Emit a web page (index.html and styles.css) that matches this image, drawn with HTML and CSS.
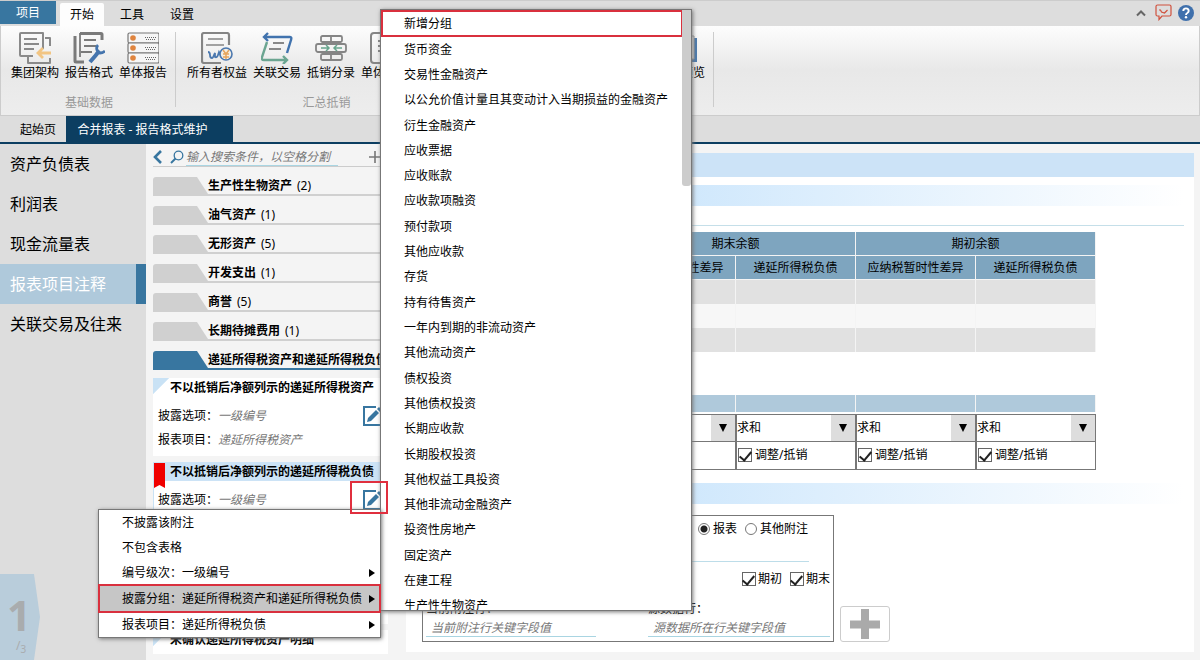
FILE: index.html
```html
<!DOCTYPE html>
<html lang="zh-CN">
<head>
<meta charset="utf-8">
<title>合并报表 - 报告格式维护</title>
<link rel="stylesheet" href="styles.css">
</head>
<body>
<div class="app">
  <header class="titlebar">
    <button class="project-tab">项目</button>
    <button class="tab tab-active">开始</button>
    <button class="tab">工具</button>
    <button class="tab">设置</button>
    <div class="window-tools">
      <svg width="10" height="16" viewBox="0 0 10 16"><path d="M1 10.500l4-4 4 4" fill="none" stroke="#666" stroke-width="2"/></svg>
      <svg width="17" height="17" viewBox="0 0 17 17"><path d="M2.500 1h12q1.500 0 1.500 1.500v8q0 1.500-1.500 1.500H7l-3 3.500v-3.500H2.500Q1 12 1 10.500v-8Q1 1 2.500 1zM4 6l1.500 0 1 2 3 1 3-3" fill="none" stroke="#d0503c" stroke-width="1.200"/></svg>
      <svg width="16" height="16" viewBox="0 0 16 16"><circle cx="8" cy="8" r="8" fill="#3f70ac"/><path d="M5.300 6q0-2.600 2.700-2.600T10.700 6q0 1.200-1.400 2Q8 8.700 8 10" fill="none" stroke="#fff" stroke-width="1.900"/><circle cx="8" cy="12.300" r="1.200" fill="#fff"/></svg>
    </div>
  </header>

  <section class="ribbon">
    <div class="ribbon-group">
      <div class="ribbon-buttons">
        <button class="ribbon-button">
          <svg class="ribbon-icon" viewBox="0 0 32 32"><g fill="none" stroke="#8a8a8a" stroke-width="2" stroke-linejoin="round"><path d="M14 24H2Q1 24 1 23V2q0-1 1-1h22v16"/><path d="M5 7h13M5 12h15M5 17h10" stroke-width="1.800"/><path d="M26 6h5v8M9 25v6h22v-5"/></g><path d="M32 21H19M24 16l-5 5 5 5" fill="none" stroke="#f2c583" stroke-width="2.800"/></svg>
          <span>集团架构</span></button>
        <button class="ribbon-button">
          <svg class="ribbon-icon" viewBox="0 0 32 32"><g fill="none" stroke="#7a7a7a"><path d="M2 4v25q0 1 1 1h8" stroke-width="3"/><path d="M7 1.500h21q1 0 1 1V8" stroke-width="3"/><path d="M7 1v24" stroke-width="1.800"/><path d="M11 8h12M11 14h12M8 20h11" stroke-width="2"/></g><path d="M17 30l6-7 3-4" fill="none" stroke="#4474ad" stroke-width="4"/><path d="M25 13q-2 2-1 5l3 3q3 0 5-2" fill="none" stroke="#4474ad" stroke-width="2.800"/></svg>
          <span>报告格式</span></button>
        <button class="ribbon-button">
          <svg class="ribbon-icon" viewBox="0 0 32 32"><g fill="#f6f6f6" stroke="#777" stroke-width="1.200"><rect x="1" y="1" width="31" height="10" rx="1.500"/><rect x="1" y="11" width="31" height="10" rx="1.500"/><rect x="1" y="21" width="31" height="10" rx="1.500"/></g><g fill="#df843e"><circle cx="6" cy="6" r="2.800"/><circle cx="6" cy="16" r="2.800"/><circle cx="6" cy="26" r="2.800"/></g><path d="M18 5.500h11M19 7.500h10M18 15.500h11M19 17.500h10M18 25.500h11M19 27.500h10" stroke="#666" stroke-dasharray="1 1"/></svg>
          <span>单体报告</span></button>
      </div>
      <div class="group-name">基础数据</div>
    </div>
    <div class="ribbon-group ribbon-group-merge">
      <div class="ribbon-buttons">
        <button class="ribbon-button">
          <svg class="ribbon-icon" viewBox="0 0 32 32"><g fill="none" stroke="#858585"><path d="M28 13V3q0-2-2-2H3Q1 1 1 3v26q0 2 2 2h17" stroke-width="2.200"/><path d="M7 7h15M5 13h18" stroke-width="1.600"/></g><path d="M7 20q2 0 2 3t2 3q1 0 2-3l1-2v4q2 1 3-2l1-3 2 4" fill="none" stroke="#4b78af" stroke-width="1.800"/><circle cx="25" cy="22" r="6" fill="#f4eee4" stroke="#4b78af" stroke-width="1.600"/><path d="M22 18l3 4 3-4M25 22v5M22 22h6M22 25h6" fill="none" stroke="#e7a55c" stroke-width="1.500"/></svg>
          <span>所有者权益</span></button>
        <button class="ribbon-button">
          <svg class="ribbon-icon" viewBox="0 0 32 32"><g fill="none" stroke-width="2.400"><path d="M7 1L3 5l4 4M3 5h26q2 0 1 3l-4 13" stroke="#4173ae"/><path d="M6 10L1 25q-1 3 2 3h23M22 24l4 4-4 4" stroke="#6ba591"/><path d="M12 11h11M8 17h12" stroke="#888" stroke-width="2"/></g></svg>
          <span>关联交易</span></button>
        <button class="ribbon-button">
          <svg class="ribbon-icon" viewBox="0 0 32 32"><g fill="none" stroke="#858585" stroke-width="1.800"><rect x="6" y="4" width="21" height="6" rx="1.500"/><rect x="1" y="12" width="30" height="8" rx="2"/><rect x="6" y="22" width="21" height="6" rx="1.500"/><path d="M16 4v6M16 22v6"/></g><path d="M6 16h7M11 13l3 3-3 3M27 16h-7M22 13l-3 3 3 3" fill="none" stroke="#67a58d" stroke-width="1.500"/></svg>
          <span>抵销分录</span></button>
        <button class="ribbon-button">
          <svg class="ribbon-icon" viewBox="0 0 32 32"><path d="M28 31H5q-3 0-3-3V4q0-3 3-3h23zM9 9h12M9 14h12M9 19h12" fill="none" stroke="#858585" stroke-width="2"/></svg>
          <span>单体抵销</span></button>
      </div>
      <div class="group-name">汇总抵销</div>
    </div>
    <div class="ribbon-group ribbon-group-preview">
      <div class="ribbon-buttons">
        <button class="ribbon-button">
          <svg class="ribbon-icon" viewBox="0 0 32 32"><path d="M6 6h26v24H6z" fill="#4c7aac"/><path d="M3 4h26v23H3z" fill="#eee" stroke="#999"/></svg>
          <span>报告预览</span></button>
      </div>
    </div>
  </section>

  <nav class="document-tabs">
    <button class="document-tab">起始页</button>
    <button class="document-tab document-tab-active">合并报表 - 报告格式维护</button>
  </nav>

  <div class="workspace">
    <nav class="sections">
      <a class="section-link" href="#">资产负债表</a>
      <a class="section-link" href="#">利润表</a>
      <a class="section-link" href="#">现金流量表</a>
      <a class="section-link section-link-active" href="#">报表项目注释</a>
      <a class="section-link" href="#">关联交易及往来</a>
      <div class="page-mark"><b>1</b><span>/<sub>3</sub></span></div>
    </nav>

    <aside class="notes">
      <div class="search">
        <svg width="10" height="14" viewBox="0 0 10 14"><path d="M8 1L2 7l6 6" fill="none" stroke="#3876a0" stroke-width="2.600"/></svg>
        <svg width="14" height="14" viewBox="0 0 14 14"><circle cx="8.500" cy="5.500" r="4.300" fill="none" stroke="#3876a0" stroke-width="1.300"/><path d="M5.500 8.500L1 13" stroke="#3876a0" stroke-width="2"/></svg>
        <input class="search-input" type="text" aria-label="搜索" placeholder="输入搜索条件，以空格分割">
        <button class="add-button" aria-label="新增"><svg width="12" height="12" viewBox="0 0 12 12"><path d="M6 0v12M0 6h12" stroke="#777" stroke-width="1.600"/></svg></button>
      </div>
      <div class="groups">
        <div class="group"><i class="group-flap"></i><b>生产性生物资产</b><span>(2)</span></div>
        <div class="group"><i class="group-flap"></i><b>油气资产</b><span>(1)</span></div>
        <div class="group"><i class="group-flap"></i><b>无形资产</b><span>(5)</span></div>
        <div class="group"><i class="group-flap"></i><b>开发支出</b><span>(1)</span></div>
        <div class="group"><i class="group-flap"></i><b>商誉</b><span>(5)</span></div>
        <div class="group"><i class="group-flap"></i><b>长期待摊费用</b><span>(1)</span></div>
        <div class="group group-open"><i class="group-flap"></i><b>递延所得税资产和递延所得税负债</b></div>
      </div>
      <div class="cards">
        <article class="card">
          <h3 class="card-title">不以抵销后净额列示的递延所得税资产</h3>
          <div class="card-row">披露选项：<em>一级编号</em>
            <button class="edit-button" aria-label="编辑"><svg width="20" height="20" viewBox="0 0 20 20"><path d="M13 1H1v18h18V9" fill="#fff" stroke="#3876a0" stroke-width="2"/><path d="M4 16l1-4 8-8 3 3-8 8zM14 3l2-2 3 3-2 2z" fill="#3876a0"/></svg></button></div>
          <div class="card-row">报表项目：<em>递延所得税资产</em></div>
        </article>
        <article class="card card-selected">
          <h3 class="card-title">不以抵销后净额列示的递延所得税负债</h3>
          <svg class="bookmark" width="11" height="25" viewBox="0 0 11 25"><path d="M0 0h11v25l-5.500-3L0 25z" fill="#f00000"/></svg>
          <div class="card-row">披露选项：<em>一级编号</em>
            <button class="edit-button" aria-label="编辑"><svg width="20" height="20" viewBox="0 0 20 20"><path d="M13 1H1v18h18V9" fill="#fff" stroke="#3876a0" stroke-width="2"/><path d="M4 16l1-4 8-8 3 3-8 8zM14 3l2-2 3 3-2 2z" fill="#3876a0"/></svg></button></div>
        </article>
        <article class="card card-closed">
          <h3 class="card-title">未确认递延所得税资产明细</h3>
        </article>
      </div>
    </aside>

    <main class="editor">
      <div class="editor-heading"></div>
      <div class="band"></div>
      <div class="editor-rule"></div>
      <table class="grid">
        <colgroup><col class="label-column"><col><col><col><col></colgroup>
        <thead>
          <tr><th rowspan="2"></th><th colspan="2">期末余额</th><th colspan="2">期初余额</th></tr>
          <tr><th>应纳税暂时性差异</th><th>递延所得税负债</th><th>应纳税暂时性差异</th><th>递延所得税负债</th></tr>
        </thead>
        <tbody>
          <tr><td></td><td></td><td></td><td></td><td></td></tr>
          <tr><td></td><td></td><td></td><td></td><td></td></tr>
          <tr><td></td><td></td><td></td><td></td><td></td></tr>
        </tbody>
      </table>
      <div class="rules-head"><i></i><i></i><i></i><i></i><i></i></div>
      <div class="rules">
        <div class="rule-cell"></div>
        <div class="rule-cell"><select class="rule-select" aria-label="期末差异"><option></option></select></div>
        <div class="rule-cell"><select class="rule-select" aria-label="期末负债"><option>求和</option></select><label class="check"><input type="checkbox" checked>调整/抵销</label></div>
        <div class="rule-cell"><select class="rule-select" aria-label="期初差异"><option>求和</option></select><label class="check"><input type="checkbox" checked>调整/抵销</label></div>
        <div class="rule-cell"><select class="rule-select" aria-label="期初负债"><option>求和</option></select><label class="check"><input type="checkbox" checked>调整/抵销</label></div>
      </div>
      <div class="band"></div>
      <div class="source">
        <div class="source-box">
          <div class="source-kind">
            <label class="radio"><input type="radio" name="kind" checked>报表</label>
            <label class="radio"><input type="radio" name="kind">其他附注</label>
          </div>
          <div class="source-rule"></div>
          <div class="source-period">
            <label class="check"><input type="checkbox" checked>期初</label>
            <label class="check"><input type="checkbox" checked>期末</label>
          </div>
          <div class="source-fields">
            <label class="field field-current">当前附注行：<input type="text" placeholder="当前附注行关键字段值"></label>
            <label class="field">源数据行：<input type="text" placeholder="源数据所在行关键字段值"></label>
          </div>
        </div>
        <button class="source-add" aria-label="新增数据源"><svg width="30" height="30" viewBox="0 0 30 30"><path d="M15 0v30M0 15.500h30" stroke="#aaa" stroke-width="8"/></svg></button>
      </div>
    </main>
  </div>

  <div class="menu context-menu" role="menu">
    <button class="menu-item" role="menuitem">不披露该附注</button>
    <button class="menu-item" role="menuitem">不包含表格</button>
    <button class="menu-item menu-parent" role="menuitem">编号级次：一级编号</button>
    <button class="menu-item menu-parent menu-current" role="menuitem">披露分组：递延所得税资产和递延所得税负债</button>
    <button class="menu-item menu-parent" role="menuitem">报表项目：递延所得税负债</button>
  </div>

  <div class="menu submenu" role="menu">
    <div class="submenu-list">
      <button class="menu-item menu-marked" role="menuitem">新增分组</button>
      <button class="menu-item" role="menuitem">货币资金</button>
      <button class="menu-item" role="menuitem">交易性金融资产</button>
      <button class="menu-item" role="menuitem">以公允价值计量且其变动计入当期损益的金融资产</button>
      <button class="menu-item" role="menuitem">衍生金融资产</button>
      <button class="menu-item" role="menuitem">应收票据</button>
      <button class="menu-item" role="menuitem">应收账款</button>
      <button class="menu-item" role="menuitem">应收款项融资</button>
      <button class="menu-item" role="menuitem">预付款项</button>
      <button class="menu-item" role="menuitem">其他应收款</button>
      <button class="menu-item" role="menuitem">存货</button>
      <button class="menu-item" role="menuitem">持有待售资产</button>
      <button class="menu-item" role="menuitem">一年内到期的非流动资产</button>
      <button class="menu-item" role="menuitem">其他流动资产</button>
      <button class="menu-item" role="menuitem">债权投资</button>
      <button class="menu-item" role="menuitem">其他债权投资</button>
      <button class="menu-item" role="menuitem">长期应收款</button>
      <button class="menu-item" role="menuitem">长期股权投资</button>
      <button class="menu-item" role="menuitem">其他权益工具投资</button>
      <button class="menu-item" role="menuitem">其他非流动金融资产</button>
      <button class="menu-item" role="menuitem">投资性房地产</button>
      <button class="menu-item" role="menuitem">固定资产</button>
      <button class="menu-item" role="menuitem">在建工程</button>
      <button class="menu-item" role="menuitem">生产性生物资产</button>
    </div>
    <div class="scroll-thumb"></div>
  </div>
  <div class="edit-marker"></div>
</div>
</body>
</html>
```

FILE: styles.css
```css
* { box-sizing: border-box; }

body {
  margin: 0;
  background: #f4f4f4;
  color: #000;
  font: 12px/18px "Noto Sans", "Noto Sans CJK SC", sans-serif;
}

button, input, select {
  margin: 0;
  padding: 0;
  border: 0;
  background: none;
  color: inherit;
  font: inherit;
}

svg { display: block; flex: none; }

.app {
  position: relative;
  display: flex;
  flex-direction: column;
  height: 100vh;
  overflow: hidden;
}

/* Title row */
.titlebar {
  display: flex;
  height: 26px;
  border-top: 1px solid #ccc;
  background: #ddd;
}
.project-tab { width: 56px; height: 23px; margin-right: 4px; background: #3876a0; color: #fff; }
.tab { width: 44px; margin: 2px 6px 0 0; padding-top: 1px; }
.tab-active { background: #fdfdfd; border-radius: 2px 2px 0 0; }
.window-tools { display: flex; align-items: center; gap: 6px; margin-left: auto; padding: 0 6px 2px 0; }
.window-tools svg:first-child { margin-right: 3px; }

/* Ribbon */
.ribbon {
  display: flex;
  height: 90px;
  padding: 6px 0 8px;
  border: 1px solid #ccc;
  border-top: 0;
  background: linear-gradient(#fdfdfd, #e8e8e8 50%, #ededed);
}
.ribbon-group {
  display: flex;
  flex-direction: column;
  align-items: center;
  padding: 0 5px 0 7px;
  border-right: 1px solid #ccc;
}
.ribbon-buttons { display: flex; }
.ribbon-button {
  display: flex;
  flex-direction: column;
  align-items: center;
  padding: 0 3px;
  white-space: nowrap;
}
.ribbon-icon { width: 32px; height: 32px; }
.group-name { margin-top: auto; line-height: 8px; color: #999; }
.ribbon-group-merge { width: 298px; padding-left: 8px; border-right: 0; }
.ribbon-group-merge .ribbon-buttons { align-self: flex-start; }
.ribbon-group-preview { width: 240px; align-items: flex-end; }

/* Document tabs */
.document-tabs { display: flex; height: 28px; padding-left: 10px; border-bottom: 2px solid #0c3e61; background: #ddd; }
.document-tab { width: 56px; padding-top: 2px; }
.document-tab-active { width: 167px; padding-right: 14px; background: #0c3e61; color: #fff; }

/* Workspace */
.workspace { display: flex; flex: 1; min-height: 0; }
.sections { display: flex; flex-direction: column; width: 146px; background: #ddd; }
.section-link {
  padding-left: 10px;
  color: #000;
  font-size: 16px;
  line-height: 40px;
  text-decoration: none;
}
.section-link-active { border-right: 10px solid #3876a0; background: #afc9db; color: #fff; }
.page-mark {
  display: flex;
  flex-direction: column;
  width: 40px;
  height: 86px;
  margin-top: auto;
  padding: 20px 0 0 7px;
  background: #b9cddb;
  clip-path: polygon(0 0, 34px 0, 40px 43px, 34px 100%, 0 100%);
  color: #a9acae;
}
.page-mark b { font-size: 42px; line-height: 42px; }
.page-mark span { padding-left: 9px; line-height: 20px; }

/* Notes column */
.notes { flex: none; width: 246px; padding: 4px 4px 0 7px; overflow: hidden; }
.search {
  display: flex;
  align-items: center;
  height: 19px;
  border-bottom: 1px solid #ccc;
}
.search svg + svg { margin-left: 7px; }
.search-input { width: 152px; height: 18px; margin-left: 2px; border-bottom: 1px solid #a9d5e2; font-style: italic; }
::placeholder { color: #777; opacity: 1; }
.add-button { margin-left: auto; margin-right: 7px; }

.groups { display: flex; flex-direction: column; gap: 10px; padding: 10px 4px 8px 0; }
.group {
  display: flex;
  gap: 5px;
  height: 19px;
  border-bottom: 2px solid #d0d0d0;
  white-space: nowrap;
}
.group-flap {
  flex: none;
  width: 55px;
  height: 17px;
  margin-right: -5px;
  border-top-left-radius: 3px;
  background: #d0d0d0;
  clip-path: polygon(0 0, 44px 0, 55px 100%, 0 100%);
}
.group-open { border-color: #3876a0; }
.group-open .group-flap { background: #3876a0; }

.cards { display: flex; flex-direction: column; gap: 6px; }
.card {
  position: relative;
  width: 235px;
  padding-bottom: 5px;
  background: linear-gradient(135deg, #c9e2f5 11px, transparent 12px) no-repeat #fff;
}
.card-selected { height: 162px; border-left: 1px solid #c9e2f5; background: #fff; }
.card-selected .card-title { margin-left: -1px; background: #cce3f6; }
.card-selected .card-row { margin-left: -1px; }
.card-closed { height: 24px; }
.card-title { margin: 0 0 7px; padding-left: 17px; font-size: 12px; line-height: 19px; }
.card-row { display: flex; align-items: center; height: 24px; padding: 0 5px; }
.card-row em { color: #777; }
.edit-button { margin-left: auto; }
.bookmark { position: absolute; top: 1px; left: 0; }
.card:first-child { height: 78px; }

/* Editor */
.editor { flex: 1; align-self: flex-start; margin: 9px 6px 0 14px; padding-bottom: 10px; background: #fff; }
.editor-heading { height: 24px; margin-bottom: 8px; background: #cce3f7; }
.band { height: 21px; margin: 0 10px; background: linear-gradient(90deg, #cce6fc 30%, #fff); }
.editor-rule { height: 20px; margin: 0 10px 6px; border-bottom: 1px solid #c5dfe9; }

.grid { width: 674px; margin: 0 0 43px 16px; border-collapse: separate; border-spacing: 0; table-layout: fixed; }
.label-column { width: 194px; }
.grid th, .grid td { height: 24px; padding: 0; border-right: 1px solid #f4f4f4; }
.grid th { border-bottom: 1px solid #f4f4f4; background: #7ea5bf; font-weight: 400; line-height: 22px; }
.grid td { background: #e1e1e1; }
.grid tbody tr:nth-child(2) td { background: #f7f7f7; }

.rules-head, .rules { display: grid; grid-template-columns: 194px repeat(4, 120px); width: 674px; margin-left: 16px; }
.rules { grid-template-columns: 193px repeat(4, 120px); }
.rules-head { margin-bottom: 2px; }
.rules-head i { height: 17px; border-right: 1px solid #f4f4f4; background: #afc9db; }
.rules { margin-bottom: 13px; border-right: 1px solid #777; border-bottom: 1px solid #777; }
.rule-cell { position: relative; height: 55px; border-top: 1px solid #777; border-left: 1px solid #777; }
.rule-cell + .rule-cell { border-left-width: 2px; }
.rule-select {
  display: block;
  width: 100%;
  height: 27px;
  border-bottom: 1px solid #777;
  border-radius: 0;
  appearance: none;
  background: linear-gradient(90deg, transparent calc(100% - 24px), #ddd 0);
}
.rule-cell:not(:first-child)::after {
  content: "";
  position: absolute;
  top: 9px;
  right: 8px;
  border: 4px solid transparent;
  border-top: 8px solid #000;
  border-bottom: 0;
  pointer-events: none;
}

.check, .radio { display: flex; align-items: center; gap: 2px; }
.rule-cell .check { gap: 3px; height: 26px; padding-left: 1px; }
.check input {
  display: grid;
  place-items: center;
  width: 14px;
  height: 14px;
  border: 1px solid #666;
  appearance: none;
  background: #fff;
}
.check input:checked::after {
  content: "";
  width: 5px;
  height: 10px;
  margin-bottom: 3px;
  border: solid #222;
  border-width: 0 2px 2px 0;
  transform: rotate(40deg);
}
.radio { gap: 3px; }
.radio input {
  width: 12px;
  height: 12px;
  border: 1px solid #777;
  border-radius: 50%;
  appearance: none;
  background: #fff;
}
.radio input:checked { background: radial-gradient(#222 3px, #fff 4px); }

.source { display: flex; align-items: flex-end; gap: 6px; margin: 11px 0 0 16px; }
.source-box { width: 412px; border: 1px solid #777; }
.source-kind { display: flex; justify-content: flex-end; gap: 8px; height: 26px; padding-right: 25px; }
.source-rule { height: 20px; margin-right: 24px; border-bottom: 1px solid #bddde9; }
.source-period { display: flex; align-items: center; justify-content: flex-end; gap: 8px; height: 34px; padding-right: 3px; }
.source-fields { display: flex; justify-content: space-between; padding: 2px 3px 4px; }
.field { display: flex; flex-direction: column; width: 182px; line-height: 22px; }
.field-current { width: 170px; }
.field input { height: 17px; padding-left: 5px; border-bottom: 1px solid #a9d5e2; font-style: italic; }
.source-add {
  display: grid;
  place-items: center;
  width: 50px;
  height: 36px;
  border: 1px solid #ccc;
  border-radius: 3px;
}

/* Menus lie over the page */
.menu { position: absolute; background: #fff; border: 1px solid #777; box-shadow: 1px 1px 4px #777; }
.menu-item { display: block; width: 100%; padding-left: 23px; text-align: left; white-space: nowrap; }
.context-menu { top: 509px; left: 98px; z-index: 2; width: 283px; }
.context-menu .menu-item { height: 25px; }
.menu-parent { display: flex; align-items: center; justify-content: space-between; padding-right: 5px; }
.menu-parent::after { content: ""; border: 4px solid transparent; border-left: 6px solid #000; border-right: 0; }
.context-menu .menu-current { height: 27px; background: #c6c6c6; outline: 2px solid #d9303e; outline-offset: -1px; }
.submenu { top: 9px; left: 380px; z-index: 1; width: 312px; height: 602px; overflow: hidden; }
.submenu-list { display: grid; grid-template-rows: 27px; grid-auto-rows: 1fr; height: 609px; margin-right: 8px; }
.menu-marked { outline: 2px solid #d9303e; outline-offset: -2px; }
.scroll-thumb { position: absolute; top: 0; right: 0; width: 9px; height: 176px; border-radius: 0 0 3px 3px; background: #ccc; }
.edit-marker { position: absolute; top: 481px; left: 350px; z-index: 3; width: 38px; height: 33px; border: 2px solid #e02f3e; }
```
